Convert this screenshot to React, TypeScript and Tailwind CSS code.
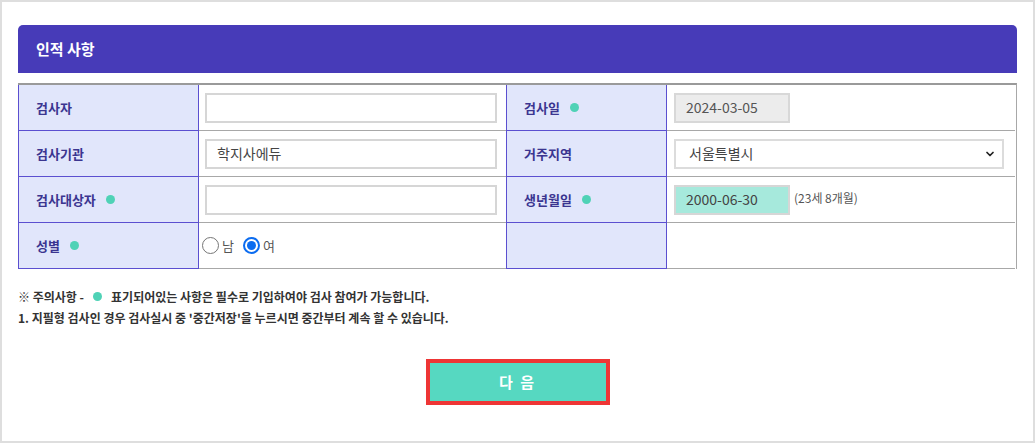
import { ChevronDown } from 'lucide-react'

const font = { fontFamily: '"Noto Sans CJK KR", "Noto Sans", sans-serif' }

function Dot() {
  return <span className="inline-block w-[9px] h-[9px] rounded-full bg-[#4fd2b6]" />
}

function Label({ text, required = false }: { text: string; required?: boolean }) {
  return (
    <div className="flex items-center gap-[10px] pl-[17px] h-[46px] bg-[#e1e6fb] border-l border-r border-b border-[#5b4fd0] text-[13px] font-bold text-[#3b3590]">
      <span>{text}</span>
      {required && <Dot />}
    </div>
  )
}

function Value({ children, pl = 'pl-[6px]' }: { children?: React.ReactNode; pl?: string }) {
  return (
    <div className={`flex items-center h-[46px] border-b border-[#a8a8a8] ${pl}`}>{children}</div>
  )
}

function TextInput({ value = '' }: { value?: string }) {
  return (
    <div className="w-[292px] h-[30px] border-2 border-[#d6d6d6] bg-white flex items-center pl-[10px] text-[14px] text-[#444]">
      {value}
    </div>
  )
}

function Radio({ checked, label }: { checked?: boolean; label: string }) {
  return (
    <div className="flex items-center gap-[3px]">
      {checked ? (
        <span className="w-[17px] h-[17px] rounded-full border-2 border-[#0b6cf0] flex items-center justify-center">
          <span className="w-[9px] h-[9px] rounded-full bg-[#0b6cf0]" />
        </span>
      ) : (
        <span className="w-[17px] h-[17px] rounded-full border-[1.5px] border-[#767676] bg-white" />
      )}
      <span className="text-[13px] text-[#555]">{label}</span>
    </div>
  )
}

export default function App() {
  return (
    <div
      style={font}
      className="w-[1035px] h-[443px] border-2 border-[#dedede] bg-white px-[16px] pt-[23px]"
    >
      {/* Header */}
      <div className="h-[48px] bg-[#473bb8] rounded-t-[5px] flex items-center pl-[18px]">
        <h2 className="text-white text-[15px] font-bold">인적 사항</h2>
      </div>

      {/* Form table */}
      <div className="mt-[10px] border-t-2 border-[#9a9a9a] border-r border-r-[#a8a8a8] grid grid-cols-[181px_307px_161px_348px]">
        <Label text="검사자" />
        <Value>
          <TextInput />
        </Value>
        <Label text="검사일" required />
        <Value pl="pl-[7px]">
          <div className="w-[116px] h-[30px] border-2 border-[#d8d8d8] bg-[#ececec] flex items-center pl-[10px] text-[14px] text-[#555]">
            2024-03-05
          </div>
        </Value>

        <Label text="검사기관" />
        <Value>
          <TextInput value="학지사에듀" />
        </Value>
        <Label text="거주지역" />
        <Value pl="pl-[7px]">
          <div className="w-[330px] h-[30px] border-2 border-[#dcdcdc] bg-white flex items-center justify-between pl-[13px] pr-[6px] text-[14px] text-[#444]">
            <span>서울특별시</span>
            <ChevronDown className="w-[12px] h-[12px] text-[#222]" strokeWidth={3.5} />
          </div>
        </Value>

        <Label text="검사대상자" required />
        <Value>
          <TextInput />
        </Value>
        <Label text="생년월일" required />
        <Value pl="pl-[7px]">
          <div className="w-[116px] h-[30px] border-2 border-[#d6d6d6] bg-[#a6e9dc] flex items-center pl-[10px] text-[14px] text-[#444]">
            2000-06-30
          </div>
          <span className="ml-[4px] -mt-[4px] text-[12px] text-[#555]">(23세 8개월)</span>
        </Value>

        <Label text="성별" required />
        <Value pl="pl-[3px]">
          <div className="flex items-center gap-[9px]">
            <Radio label="남" />
            <Radio checked label="여" />
          </div>
        </Value>
        <Label text="" />
        <Value />
      </div>

      {/* Notes */}
      <div className="mt-[17px] text-[12px] font-semibold text-[#333] leading-[21px]">
        <p className="flex items-center">
          ※ 주의사항 -<span className="mx-[9px] inline-flex"><Dot /></span>표기되어있는 사항은 필수로 기입하여야 검사 참여가 가능합니다.
        </p>
        <p>1. 지필형 검사인 경우 검사실시 중 '중간저장'을 누르시면 중간부터 계속 할 수 있습니다.</p>
      </div>

      {/* Next button */}
      <div className="mt-[31px] flex justify-center">
        <button className="w-[184px] h-[46px] border-4 border-[#ee3535] bg-[#56d8c1] text-white text-[15px] font-bold tracking-[2px]">
          다 음
        </button>
      </div>
    </div>
  )
}
